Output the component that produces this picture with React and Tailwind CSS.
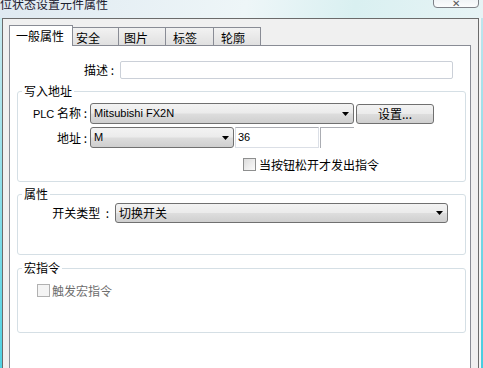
const combo =
  "flex items-center justify-between rounded-[3px] border border-[#707070] bg-[linear-gradient(#f3f3f3_0%,#ebebeb_48%,#dddddd_52%,#cfcfcf_100%)] pl-[3px] pr-[4px]";

const latin = "font-['Liberation_Sans',sans-serif] text-[11px]";

const Arrow = () => (
  <svg width="7" height="4" viewBox="0 0 7 4">
    <path d="M0 0h7L3.5 4z" fill="#000" />
  </svg>
);

const Check = ({ disabled }) => (
  <div
    className={
      disabled
        ? "h-[13px] w-[13px] border border-[#b1b1b1] bg-[#f4f4f4]"
        : "h-[13px] w-[13px] border border-[#8e8f8f] bg-[linear-gradient(135deg,#dcdcdc,#fbfbfb)] p-[2px]"
    }
  />
);

const tabs = [
  { name: "安全", cls: "h-[18px] w-[46px] border-r border-t border-[#898c95] bg-[linear-gradient(#f2f2f2,#e0e0e0)] pl-[3px]" },
  { name: "图片", cls: "h-[18px] w-[47px] border-r border-t border-[#898c95] bg-[linear-gradient(#f2f2f2,#e0e0e0)] pl-[5px]" },
  { name: "标签", cls: "h-[18px] w-[48px] border-r border-t border-[#898c95] bg-[linear-gradient(#f2f2f2,#e0e0e0)] pl-[7px]" },
  { name: "轮廓", cls: "h-[18px] w-[47px] border-r border-t border-[#898c95] bg-[linear-gradient(#f2f2f2,#e0e0e0)] pl-[7px]" },
];

export default function App() {
  return (
    <div className="relative flex h-[368px] w-[483px] flex-col overflow-hidden bg-[linear-gradient(100deg,#dfe9f1_0%,#eef6f8_45%,#d9f0f1_65%,#eef5f7_100%)] font-['Noto_Sans_CJK_SC',sans-serif] text-[12px] text-black">
      {/* title bar */}
      <div className="h-[18px] shrink-0">
        <div className="-mt-[3px] text-[12px] leading-[13px] text-[#1c2030]">位状态设置元件属性</div>
      </div>
      <div className="absolute left-[433px] top-[-6px] flex h-[14px] w-[46px] items-end justify-center rounded-b-[4px] border border-[#7d8087] bg-[linear-gradient(#e9eef2,#fbfcfd)]">
        <span className="text-[10px] leading-[9px] text-[#555]">✕</span>
      </div>

      <div className="flex min-h-0 flex-1">
        <div className="w-[2px] bg-[linear-gradient(#c9eaf0,#4fd2e3)]" />
        <div className="w-[477px] border-l border-r border-t border-[#6b6b6b] bg-[#f0f0f0] pl-[6px]">
          {/* tabs */}
          <div className="flex h-[26px] items-end">
            <div className="relative z-10 -mb-px h-[21px] w-[64px] border-l border-r border-t border-[#898c95] bg-white pl-[6px] pt-[3px] leading-[14px]">
              一般属性
            </div>
            {tabs.map((t) => (
              <div key={t.name} className={t.cls}>
                <div className="pt-[3px] leading-[14px]">{t.name}</div>
              </div>
            ))}
          </div>

          {/* page */}
          <div className="h-[340px] w-[462px] border border-[#898c95] bg-white">
            <div className="mt-[15px] flex items-center">
              <div className="w-[106px] pr-[2px] text-right">描述 :</div>
              <div className="ml-[4px] h-[18px] w-[333px] rounded-[2px] border border-[#cbd0d8]" />
            </div>

            <fieldset className="ml-[7px] mr-[4px] mt-[5px] rounded-[3px] border border-[#d5dfe5] pb-[10px]">
              <legend className="ml-[4px] px-[2px] leading-[14px]">写入地址</legend>
              <div className="mt-[5px] flex items-center">
                <div className="w-[70px] pr-[1px] text-right">
                  <span className={latin}>PLC</span> 名称 :
                </div>
                <div className={`${combo} ml-[2px] h-[21px] w-[264px]`}>
                  <span className={latin}>Mitsubishi FX2N</span>
                  <Arrow />
                </div>
                <div className="ml-[2px] flex h-[20px] w-[78px] items-center justify-center rounded-[3px] border border-[#707070] bg-[linear-gradient(#f3f3f3_0%,#ebebeb_48%,#dddddd_52%,#cfcfcf_100%)]">
                  设置...
                </div>
              </div>
              <div className="mt-[3px] flex items-center">
                <div className="w-[70px] pr-[1px] text-right">地址 :</div>
                <div className={`${combo} ml-[2px] h-[21px] w-[144px]`}>
                  <span className={latin}>M</span>
                  <Arrow />
                </div>
                <div className="ml-[1px] flex h-[21px] w-[84px] items-center border border-[#dbdfe6] border-t-[#abadb3] pl-[2px]">
                  <span className={latin}>36</span>
                </div>
                <div className="ml-[1px] h-[21px] w-[34px] border-l border-t border-[#abadb3]" />
              </div>
              <div className="mt-[10px] flex items-center">
                <div className="ml-[225px]">
                  <Check />
                </div>
                <span className="ml-[3px] leading-[13px]">当按钮松开才发出指令</span>
              </div>
            </fieldset>

            <fieldset className="ml-[7px] mr-[4px] mt-[5px] rounded-[3px] border border-[#d5dfe5] pb-[31px]">
              <legend className="ml-[4px] px-[2px] leading-[14px]">属性</legend>
              <div className="mt-[2px] flex items-center">
                <div className="w-[95px] pr-[4px] text-right">开关类型 &nbsp;:</div>
                <div className={`${combo} ml-[2px] h-[20px] w-[333px]`}>
                  <span>切换开关</span>
                  <Arrow />
                </div>
              </div>
            </fieldset>

            <fieldset className="ml-[7px] mr-[4px] mt-[6px] rounded-[3px] border border-[#d5dfe5] pb-[35px]">
              <legend className="ml-[4px] px-[2px] leading-[14px]">宏指令</legend>
              <div className="mt-[9px] flex items-center">
                <div className="ml-[19px]">
                  <Check disabled />
                </div>
                <span className="ml-[2px] leading-[13px] text-[#6d6d6d]">触发宏指令</span>
              </div>
            </fieldset>
          </div>
        </div>
        <div className="w-[2px] bg-[#f4f4f4]" />
        <div className="w-[2px] bg-[linear-gradient(#bfe6ee,#46cde0)]" />
      </div>
    </div>
  );
}
